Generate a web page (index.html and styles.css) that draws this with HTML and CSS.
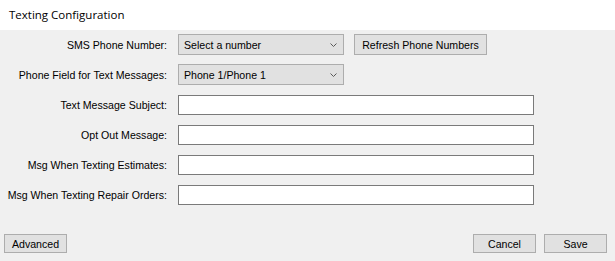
FILE: index.html
```html
<!DOCTYPE html>
<html>
<head>
<meta charset="utf-8">
<link rel="stylesheet" href="styles.css">
</head>
<body>
<div class="title">Texting Configuration</div>
<div class="panel">
  <div class="form">
    <div class="row combo-row">
      <div class="label">SMS Phone Number:</div>
      <div class="combo"><span>Select a number</span>
        <svg class="chev" width="7" height="4" viewBox="0 0 7 4"><polyline points="0.5,0.5 3.5,3.5 6.5,0.5" fill="none" stroke="#5a5a5a" stroke-width="1"/></svg>
      </div>
      <div class="btn refresh">Refresh Phone Numbers</div>
    </div>
    <div class="row combo-row">
      <div class="label">Phone Field for Text Messages:</div>
      <div class="combo"><span>Phone 1/Phone 1</span>
        <svg class="chev" width="7" height="4" viewBox="0 0 7 4"><polyline points="0.5,0.5 3.5,3.5 6.5,0.5" fill="none" stroke="#5a5a5a" stroke-width="1"/></svg>
      </div>
    </div>
    <div class="row text-row">
      <div class="label">Text Message Subject:</div>
      <div class="textbox"></div>
    </div>
    <div class="row text-row">
      <div class="label">Opt Out Message:</div>
      <div class="textbox"></div>
    </div>
    <div class="row text-row">
      <div class="label">Msg When Texting Estimates:</div>
      <div class="textbox"></div>
    </div>
    <div class="row text-row">
      <div class="label">Msg When Texting Repair Orders:</div>
      <div class="textbox"></div>
    </div>
  </div>
  <div class="footer">
    <div class="btn small">Advanced</div>
    <div class="right">
      <div class="btn small">Cancel</div>
      <div class="btn small">Save</div>
    </div>
  </div>
</div>
</body>
</html>
```
FILE: styles.css
```css
html, body {
  margin: 0;
  padding: 0;
  width: 615px;
  height: 261px;
  overflow: hidden;
  background: #ffffff;
}
body {
  font-family: "Liberation Sans", Arial, sans-serif;
  font-size: 10.6px;
  color: #000;
  display: flex;
  flex-direction: column;
}
.title {
  height: 30px;
  box-sizing: border-box;
  padding: 7px 0 0 9px;
  font-family: "Open Sans", "Liberation Sans", sans-serif;
  font-size: 11.5px;
  color: #000;
}
.panel {
  flex: 1;
  background: #f0f0f0;
  display: flex;
  flex-direction: column;
}
.form {
  padding-top: 4px;
  display: flex;
  flex-direction: column;
}
.row {
  display: flex;
  align-items: center;
}
.combo-row {
  height: 21px;
  margin-bottom: 9px;
}
.combo-row + .text-row {
  margin-top: 1px;
}
.text-row {
  height: 20px;
  margin-bottom: 10px;
}
.label {
  width: 178px;
  box-sizing: border-box;
  padding-right: 11px;
  text-align: right;
  white-space: nowrap;
}
.combo {
  width: 166px;
  height: 21px;
  box-sizing: border-box;
  border: 1px solid #adadad;
  background: #e1e1e1;
  display: flex;
  align-items: center;
  justify-content: space-between;
  padding: 0 6px 0 5px;
}
.textbox {
  width: 356px;
  height: 20px;
  box-sizing: border-box;
  border: 1px solid #7a7a7a;
  background: #ffffff;
}
.btn {
  box-sizing: border-box;
  border: 1px solid #adadad;
  background: #e1e1e1;
  display: flex;
  align-items: center;
  justify-content: center;
  white-space: nowrap;
}
.refresh {
  margin-left: 10px;
  width: 133px;
  height: 21px;
}
.footer {
  margin-top: auto;
  display: flex;
  justify-content: space-between;
  padding: 0 8px 8px 4px;
}
.right {
  display: flex;
  gap: 8px;
}
.small {
  width: 63px;
  height: 19px;
}
```
